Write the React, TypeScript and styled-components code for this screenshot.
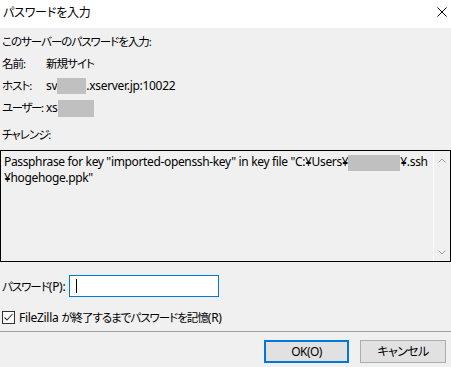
import * as React from 'react';
import styled, { createGlobalStyle } from 'styled-components';

const GlobalStyle = createGlobalStyle`
  html, body {
    margin: 0;
    padding: 0;
    background: #f0f0f0;
  }
`;

const Window = styled.div`
  width: 451px;
  height: 367px;
  display: flex;
  flex-direction: column;
  background: #f0f0f0;
  color: #000;
  font-family: 'Noto Sans', 'Noto Sans CJK JP', sans-serif;
  font-size: 11.5px;
  font-feature-settings: 'palt';
  letter-spacing: -1px;
  overflow: hidden;
`;

const TitleBar = styled.div`
  height: 28px;
  flex: none;
  display: flex;
  align-items: center;
  justify-content: space-between;
  background: #fff;
  padding: 0 4px 0 3px;
  box-sizing: border-box;
`;

const TitleText = styled.span`
  font-size: 12px;
  line-height: 16px;
  margin-top: -2px;
  letter-spacing: -0.2px;
`;

const CloseIcon = styled.svg`
  width: 10px;
  height: 10px;
  margin-top: -4px;
`;

const Body = styled.div`
  flex: 1;
  display: flex;
  flex-direction: column;
  padding-top: 3px;
`;

const Line = styled.div`
  height: 22px;
  line-height: 22px;
  padding-left: 2px;
  display: flex;
  align-items: center;
  white-space: nowrap;
`;

const InfoRow = styled(Line)`
  display: grid;
  grid-template-columns: minmax(44px, max-content) auto;
`;

const Label = styled.span<{ tight?: boolean }>`
  letter-spacing: ${p => (p.tight ? '-1.4px' : 'inherit')};
`;

const Value = styled.span`
  display: flex;
  align-items: center;
`;

const Latin = styled.span`
  font-size: 12px;
  letter-spacing: -0.3px;
`;

const Mask = styled.span<{ w: number; h?: number }>`
  display: inline-block;
  width: ${p => p.w}px;
  height: ${p => p.h ?? 16}px;
  background: #c0c0c0;
  vertical-align: middle;
`;

const ChallengeLabel = styled(Line)`
  margin-top: 5px;
`;

const ChallengeBox = styled.div`
  margin-top: 4px;
  height: 112px;
  box-sizing: border-box;
  border: 1px solid #000;
  display: flex;
  background: #f0f0f0;
`;

const ChallengeText = styled.div`
  flex: 1;
  padding: 4px 2px 0 3px;
  font-size: 12px;
  line-height: 14px;
  letter-spacing: -0.35px;
  white-space: nowrap;
`;

const Scrollbar = styled.div`
  width: 16px;
  flex: none;
  border-left: 1px solid #fafafa;
  display: flex;
  flex-direction: column;
  justify-content: space-between;
  align-items: center;
  padding: 7px 0 6px;
`;

const Chevron = styled.svg`
  width: 8px;
  height: 5px;
`;

const PasswordRow = styled.div`
  margin-top: 13px;
  display: flex;
  align-items: center;
  padding-left: 2px;
  gap: 4px;
`;

const PasswordInput = styled.div`
  width: 150px;
  height: 22px;
  box-sizing: border-box;
  border: 1px solid #0078d7;
  background: #fff;
  display: flex;
  align-items: center;
  padding-left: 6px;
`;

const Caret = styled.span`
  width: 1px;
  height: 14px;
  background: #000;
`;

const CheckRow = styled.label`
  margin-top: 12px;
  display: flex;
  align-items: center;
  gap: 4px;
  padding-left: 2px;
  height: 16px;
  white-space: pre;
`;

const CheckBox = styled.span`
  width: 13px;
  height: 13px;
  box-sizing: border-box;
  border: 1px solid #333;
  background: #fff;
  display: flex;
  align-items: center;
  justify-content: center;
`;

const Separator = styled.div`
  margin-top: 6px;
  height: 1px;
  background: #a0a0a0;
`;

const ButtonBar = styled.div`
  margin-top: 8px;
  display: flex;
  justify-content: flex-end;
  gap: 11px;
  padding-right: 5px;
`;

const Button = styled.button<{ primary?: boolean }>`
  width: ${p => (p.primary ? 85 : 86)}px;
  height: 23px;
  box-sizing: border-box;
  border: ${p => (p.primary ? '2px solid #0078d7' : '1px solid #adadad')};
  background: #e1e1e1;
  font: inherit;
  font-size: 12px;
  letter-spacing: -0.6px;
  font-feature-settings: inherit;
  color: #000;
  padding: 0;
  line-height: 1;
`;

export default function App() {
  return (
    <Window>
      <GlobalStyle />
      <TitleBar>
        <TitleText>パスワードを入力</TitleText>
        <CloseIcon viewBox="0 0 10 10">
          <path d="M0.5 0.5 L9.5 9.5 M9.5 0.5 L0.5 9.5" stroke="#000" strokeWidth="1" fill="none" />
        </CloseIcon>
      </TitleBar>
      <Body>
        <Line>このサーバーのパスワードを入力:</Line>
        <InfoRow>
          <Label>名前:</Label>
          <Value>新規サイト</Value>
        </InfoRow>
        <InfoRow>
          <Label>ホスト:</Label>
          <Value>
            <Latin>sv</Latin>
            <Mask w={29} />
            <Latin>.xserver.jp:10022</Latin>
          </Value>
        </InfoRow>
        <InfoRow>
          <Label tight>ユーザー:</Label>
          <Value>
            <Latin>xs</Latin>
            <Mask w={36} h={17} />
          </Value>
        </InfoRow>
        <ChallengeLabel>チャレンジ:</ChallengeLabel>
        <ChallengeBox>
          <ChallengeText>
            Passphrase for key "imported-openssh-key" in key file "C:¥Users¥<Mask w={52} />¥.ssh
            <br />
            ¥hogehoge.ppk"
          </ChallengeText>
          <Scrollbar>
            <Chevron viewBox="0 0 8 5">
              <path d="M0.5 4.5 L4 1 L7.5 4.5" stroke="#a0a0a0" fill="none" />
            </Chevron>
            <Chevron viewBox="0 0 8 5">
              <path d="M0.5 0.5 L4 4 L7.5 0.5" stroke="#a0a0a0" fill="none" />
            </Chevron>
          </Scrollbar>
        </ChallengeBox>
        <PasswordRow>
          <span>
            パスワード<Latin>(P):</Latin>
          </span>
          <PasswordInput>
            <Caret />
          </PasswordInput>
        </PasswordRow>
        <CheckRow>
          <CheckBox>
            <svg width="11" height="11" viewBox="0 0 11 11">
              <path d="M1.5 5.5 L4 8 L9.5 2" stroke="#333" strokeWidth="1.1" fill="none" />
            </svg>
          </CheckBox>
          <span>
            <Latin>FileZilla </Latin>が終了するまでパスワードを記憶<Latin>(R)</Latin>
          </span>
        </CheckRow>
        <Separator />
        <ButtonBar>
          <Button primary>OK(O)</Button>
          <Button>キャンセル</Button>
        </ButtonBar>
      </Body>
    </Window>
  );
}
